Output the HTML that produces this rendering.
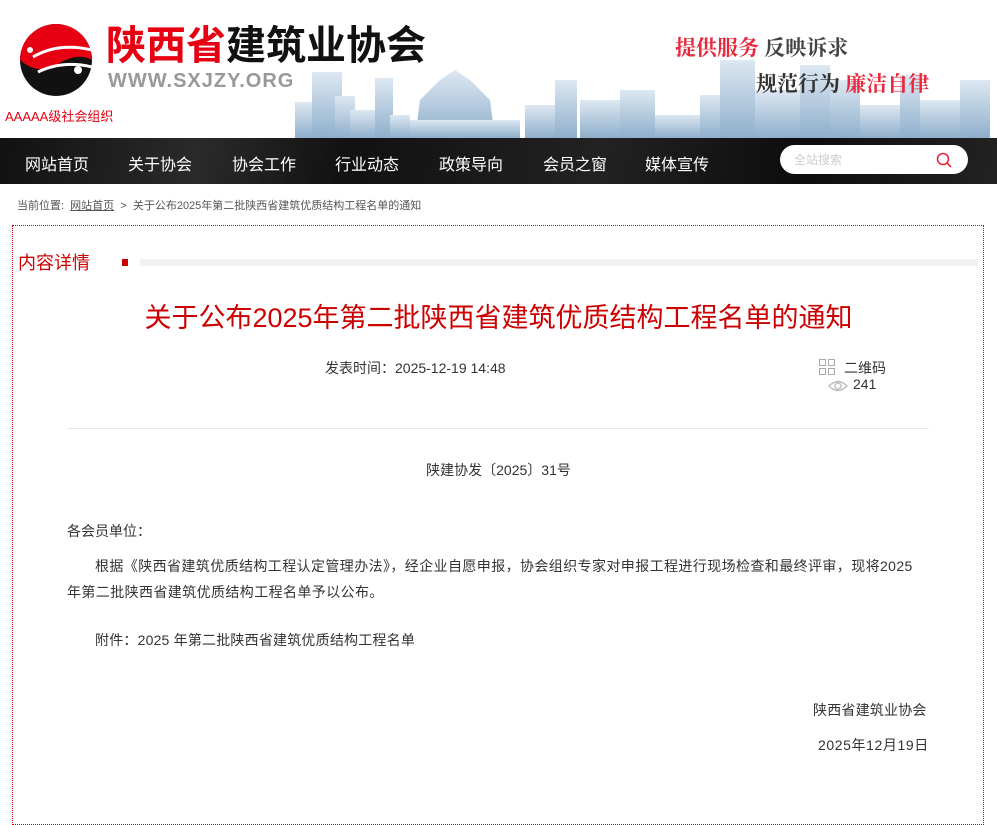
<!DOCTYPE html>
<html><head><meta charset="utf-8"><style>
*{margin:0;padding:0;box-sizing:border-box}
body{width:997px;height:791px;overflow:hidden;background:#fff;font-family:"Liberation Sans","Noto Sans CJK SC",sans-serif;color:#333;position:relative}
.abs{position:absolute}
.nav{top:138px;left:0;width:997px;height:46px;background:linear-gradient(100deg,#111 0%,#2a2a2a 20%,#111 35%,#222 60%,#0d0d0d 80%,#222 100%)}
.nav span{position:absolute;top:13px;color:#fff;font-size:16px}
.txt{font-size:14px;color:#333}
</style></head><body>
<svg class="abs" style="left:290px;top:60px" width="707" height="78">
<defs><linearGradient id="g" x1="0" y1="0" x2="0" y2="1"><stop offset="0" stop-color="#dde8f2"/><stop offset="1" stop-color="#8fafcc"/></linearGradient></defs>
<g fill="url(#g)">
<rect x="5" y="42" width="30" height="36"/><rect x="22" y="12" width="30" height="66"/><rect x="45" y="36" width="20" height="42"/><rect x="60" y="50" width="25" height="28"/><rect x="85" y="18" width="18" height="60"/><rect x="100" y="55" width="20" height="23"/>
<path d="M125 78 L130 40 L150 20 L165 10 L180 20 L200 40 L205 78Z"/><rect x="120" y="60" width="110" height="18"/>
<rect x="235" y="45" width="30" height="33"/><rect x="265" y="20" width="22" height="58"/><rect x="290" y="40" width="40" height="38"/><rect x="330" y="30" width="35" height="48"/><rect x="365" y="55" width="50" height="23"/><rect x="410" y="35" width="30" height="43"/><rect x="430" y="0" width="35" height="78"/><rect x="465" y="30" width="45" height="48"/><rect x="510" y="5" width="30" height="73"/><rect x="540" y="20" width="30" height="58"/><rect x="570" y="45" width="40" height="33"/><rect x="610" y="15" width="20" height="63"/><rect x="630" y="40" width="40" height="38"/><rect x="670" y="20" width="30" height="58"/>
</g></svg>
<svg class="abs" style="left:18px;top:22px" width="78" height="76">
<circle cx="38" cy="38" r="36" fill="#111"/>
<path d="M2 38 A36 36 0 0 1 74 38 Q60 30 40 42 Q20 54 2 38Z" fill="#e60012"/>
<path d="M15 35 Q40 20 74 28" stroke="#fff" stroke-width="3" fill="none"/>
<path d="M20 50 Q45 38 74 45" stroke="#fff" stroke-width="3" fill="none"/>
<circle cx="12" cy="28" r="3" fill="#fff"/><circle cx="60" cy="48" r="4" fill="#fff"/>
</svg>
<div class="abs" style="left:106px;top:22px;font-size:40px;font-weight:bold;line-height:48px"><span style="color:#e60012">陕西省</span><span style="color:#111">建筑业协会</span></div>
<div class="abs" style="left:108px;top:70px;font-size:20px;font-weight:bold;color:#999;letter-spacing:1px">WWW.SXJZY.ORG</div>
<div class="abs" style="left:5px;top:106px;font-size:13px;color:#e60012">AAAAA级社会组织</div>
<div class="abs" style="left:675px;top:32px;font-size:21px;font-weight:bold;font-family:'Noto Serif CJK SC',serif"><span style="color:#e8283c">提供服务</span> <span style="color:#444">反映诉求</span></div>
<div class="abs" style="left:756px;top:68px;font-size:21px;font-weight:bold;font-family:'Noto Serif CJK SC',serif"><span style="color:#333">规范行为</span> <span style="color:#e8283c">廉洁自律</span></div>
<div class="abs nav">
<span style="left:25px">网站首页</span><span style="left:128px">关于协会</span><span style="left:232px">协会工作</span><span style="left:335px">行业动态</span><span style="left:439px">政策导向</span><span style="left:543px">会员之窗</span><span style="left:645px">媒体宣传</span>
<div class="abs" style="left:780px;top:7px;width:188px;height:29px;background:#fff;border-radius:15px"><span style="position:absolute;left:14px;top:6px;font-size:12px;color:#ccc">全站搜索</span>
<svg class="abs" style="left:156px;top:7px" width="16" height="16"><circle cx="7" cy="7" r="5.5" stroke="#e8283c" stroke-width="1.6" fill="none"/><path d="M11 11 L15 15" stroke="#e8283c" stroke-width="1.6"/></svg></div>
</div>
<div class="abs" style="left:17px;top:197px;font-size:11px;color:#555">当前位置: &nbsp;<u>网站首页</u> &nbsp;&gt; &nbsp;关于公布2025年第二批陕西省建筑优质结构工程名单的通知</div>
<div class="abs" style="left:12px;top:225px;width:972px;height:600px;border:1px dotted #c00"></div>
<div class="abs" style="left:18px;top:249px;font-size:18px;color:#c00">内容详情</div>
<div class="abs" style="left:122px;top:259px;width:6px;height:7px;background:#c00"></div>
<div class="abs" style="left:140px;top:259px;width:838px;height:7px;background:#f2f2f2"></div>
<div class="abs" style="left:0;width:997px;top:296px;text-align:center;font-size:27px;color:#c00">关于公布2025年第二批陕西省建筑优质结构工程名单的通知</div>
<div class="abs txt" style="left:325px;top:358px">发表时间：2025-12-19 14:48</div>
<svg class="abs" style="left:819px;top:359px" width="16" height="16" fill="none" stroke="#aaa"><rect x="0.5" y="0.5" width="6" height="6"/><rect x="9.5" y="0.5" width="6" height="6"/><rect x="0.5" y="9.5" width="6" height="6"/><rect x="9.5" y="9.5" width="6" height="6"/></svg>
<div class="abs txt" style="left:844px;top:358px">二维码</div>
<svg class="abs" style="left:828px;top:380px" width="20" height="12"><path d="M1 6 Q10 -3 19 6 Q10 15 1 6Z" stroke="#bbb" fill="none" stroke-width="1.3"/><circle cx="10" cy="6" r="3" stroke="#bbb" fill="none" stroke-width="1.3"/></svg>
<div class="abs txt" style="left:853px;top:376px">241</div>
<div class="abs" style="left:67px;top:428px;width:862px;height:1px;background:#e8e8e8"></div>
<div class="abs txt" style="left:0;width:997px;top:460px;text-align:center">陕建协发〔2025〕31号</div>
<div class="abs txt" style="left:67px;top:521px">各会员单位：</div>
<div class="abs txt" style="left:67px;top:553px;width:880px;line-height:26px;text-indent:28px;letter-spacing:0.4px">根据《陕西省建筑优质结构工程认定管理办法》，经企业自愿申报，协会组织专家对申报工程进行现场检查和最终评审，现将2025<br>年第二批陕西省建筑优质结构工程名单予以公布。</div>
<div class="abs txt" style="left:95px;top:630px;letter-spacing:0.2px">附件：2025 年第二批陕西省建筑优质结构工程名单</div>
<div class="abs txt" style="left:813px;top:700px;letter-spacing:0.2px">陕西省建筑业协会</div>
<div class="abs txt" style="left:818px;top:735px;letter-spacing:0.6px">2025年12月19日</div>
</body></html>
